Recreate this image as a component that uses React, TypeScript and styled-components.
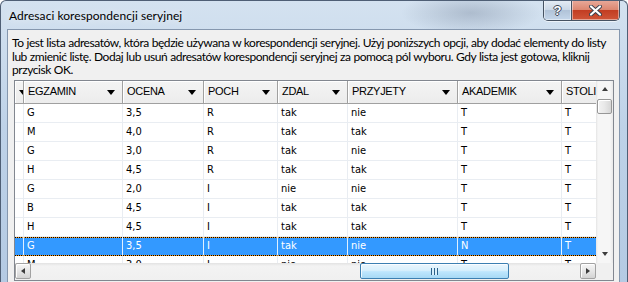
import React from 'react';
import styled, { createGlobalStyle } from 'styled-components';

const GlobalStyle = createGlobalStyle`
  html, body {
    margin: 0;
    padding: 0;
    background: #fff;
  }
  body {
    width: 628px;
    height: 282px;
    overflow: hidden;
  }
`;

const uiFont = `Lato, "Noto Sans", sans-serif`;
const gridFont = `"DejaVu Sans Condensed", "DejaVu Sans", sans-serif`;

const Window = styled.div`
  width: 628px;
  height: 282px;
  box-sizing: border-box;
  overflow: hidden;
  border: 1px solid #4f5f75;
  border-bottom: none;
  border-radius: 6px 6px 0 0;
  background:
    radial-gradient(ellipse 70px 22px at 470px 12px, rgba(80, 95, 120, 0.28), transparent),
    linear-gradient(180deg, #d4e2f0 0%, #bed2e8 45%, #b4cae3 100%);
  display: flex;
  flex-direction: column;
`;

const TitleBar = styled.div`
  height: 28px;
  display: flex;
  align-items: flex-start;
  justify-content: space-between;
  padding-left: 8px;
`;

const Title = styled.div`
  font-family: ${uiFont};
  font-size: 12px;
  letter-spacing: 0.05px;
  line-height: 29px;
  color: #000;
  text-shadow: 0 0 8px rgba(255, 255, 255, 0.9);
`;

const Caption = styled.div`
  display: flex;
  margin: -1px 7px 0 0;
  border: 1px solid #465262;
  border-top: none;
  border-radius: 0 0 5px 5px;
  overflow: hidden;
  box-shadow: 0 1px 0 rgba(255, 255, 255, 0.6);
`;

const CaptionButton = styled.div<{ $close?: boolean }>`
  height: 20px;
  width: ${(p) => (p.$close ? '47px' : '27px')};
  display: flex;
  align-items: center;
  justify-content: center;
  box-shadow: inset 0 0 0 1px rgba(255, 255, 255, 0.45);
  background: ${(p) =>
    p.$close
      ? 'linear-gradient(180deg, #e9ab9c 0%, #dc8771 48%, #c23d22 52%, #cf5539 100%)'
      : 'linear-gradient(180deg, #e6edf5 0%, #cbd8e7 48%, #b1c3d8 52%, #c4d6ea 100%)'};
  & + & {
    border-left: 1px solid #465262;
  }
`;

const HelpGlyph = styled.span`
  font-family: "Liberation Sans", sans-serif;
  font-weight: bold;
  font-size: 13px;
  color: #fff;
  text-shadow: -1px 0 #3c4656, 1px 0 #3c4656, 0 -1px #3c4656, 0 1px #3c4656;
`;

const Client = styled.div`
  flex: 1;
  margin: 0 7px 0 6px;
  background: #f0f0f0;
  border: 1px solid #8597ae;
  border-bottom: none;
  padding: 6px 0 0 4px;
`;

const Intro = styled.p`
  margin: 0;
  font-family: ${uiFont};
  font-size: 12px;
  letter-spacing: -0.45px;
  word-spacing: 0.3px;
  line-height: 13.5px;
  color: #000;
  white-space: nowrap;
`;

const GridBox = styled.div`
  margin: 3px 0 0 2px;
  width: 600px;
  box-sizing: border-box;
  border: 1px solid #828790;
  background: #fff;
  display: grid;
  grid-template-columns: 581px 17px;
  grid-template-rows: 182px 17px;
`;

const DataArea = styled.div`
  overflow: hidden;
`;

const columns = '9px 99px 81px 74px 70px 110px 104px 90px';

const HeaderRow = styled.div`
  display: grid;
  grid-template-columns: ${columns};
  height: 23px;
`;

const HeaderCell = styled.div`
  box-sizing: border-box;
  display: flex;
  align-items: center;
  justify-content: space-between;
  overflow: hidden;
  padding: 0 0 1px 4px;
  border-right: 1px solid #a0a0a0;
  border-bottom: 1px solid #a0a0a0;
  box-shadow: inset 1px 1px 0 #fff;
  background: linear-gradient(180deg, #f4f4f4 0%, #ececec 100%);
  font-family: "Liberation Sans", Arial, sans-serif;
  font-size: 11px;
  letter-spacing: -0.3px;
  color: #000;
  white-space: nowrap;
  &:first-child {
    padding-left: 0;
    justify-content: flex-end;
  }
`;

const DropArrow = styled.span`
  flex: none;
  width: 0;
  height: 0;
  margin: 2px 7px 0 4px;
  border-left: 4.5px solid transparent;
  border-right: 4.5px solid transparent;
  border-top: 5px solid #000;
`;

const CutArrow = styled(DropArrow)`
  margin: 2px -4px 0 0;
`;

const Row = styled.div<{ $selected?: boolean }>`
  display: grid;
  grid-template-columns: ${columns};
  height: 19px;
  color: ${(p) => (p.$selected ? '#fff' : '#000')};
  background: ${(p) =>
    p.$selected
      ? `repeating-linear-gradient(90deg, #000 0 1px, #ff9c1a 1px 2px) left top / 100% 1px no-repeat,
         repeating-linear-gradient(90deg, #000 0 1px, #ff9c1a 1px 2px) left bottom / 100% 1px no-repeat,
         #3399ff`
      : '#fff'};
`;

const Cell = styled.div<{ $selected?: boolean }>`
  box-sizing: border-box;
  padding: 0 0 0 3px;
  border-right: 1px solid ${(p) => (p.$selected ? 'rgba(255,255,255,0.85)' : '#e9edf2')};
  border-bottom: 1px solid ${(p) => (p.$selected ? 'transparent' : '#e9edf2')};
  font-family: ${gridFont};
  font-size: 11px;
  line-height: 18px;
  white-space: nowrap;
  overflow: hidden;
`;

const VScroll = styled.div`
  grid-column: 2;
  grid-row: 1;
  display: flex;
  flex-direction: column;
  background: linear-gradient(90deg, #e4e4e4 0, #f6f6f6 2px, #f6f6f6 14px, #e9e9e9 100%);
`;

const ArrowSlot = styled.div`
  height: 17px;
  flex: none;
  display: flex;
  align-items: center;
  justify-content: center;
`;

const Tri = styled.span<{ $dir: 'up' | 'down' | 'left' | 'right' }>`
  width: 0;
  height: 0;
  ${(p) =>
    p.$dir === 'up'
      ? 'border-left: 3.5px solid transparent; border-right: 3.5px solid transparent; border-bottom: 4px solid #3c3c3c;'
      : p.$dir === 'down'
      ? 'border-left: 3.5px solid transparent; border-right: 3.5px solid transparent; border-top: 4px solid #3c3c3c;'
      : p.$dir === 'left'
      ? 'border-top: 3.5px solid transparent; border-bottom: 3.5px solid transparent; border-right: 4px solid #3c3c3c;'
      : 'border-top: 3.5px solid transparent; border-bottom: 3.5px solid transparent; border-left: 4px solid #3c3c3c;'}
`;

const VThumb = styled.div`
  flex: none;
  margin: 1px 0 0 1px;
  width: 15px;
  height: 15px;
  box-sizing: border-box;
  border: 1px solid #979797;
  border-radius: 2px;
  background: linear-gradient(90deg, #f3f3f3 0%, #e8e8e8 50%, #d6d6d6 100%);
  box-shadow: inset 1px 1px 0 #fff;
`;

const VTrack = styled.div`
  flex: 1;
`;

const HScroll = styled.div`
  grid-column: 1;
  grid-row: 2;
  display: flex;
  align-items: center;
  background: linear-gradient(180deg, #e2e2e2 0, #f3f3f3 3px, #f0f0f0 100%);
`;

const HButton = styled.div`
  flex: none;
  width: 16px;
  height: 16px;
  box-sizing: border-box;
  border: 1px solid #a2a2a2;
  border-radius: 2px;
  display: flex;
  align-items: center;
  justify-content: center;
  background: linear-gradient(180deg, #f6f6f6 0%, #e6e6e6 50%, #d4d4d4 100%);
  box-shadow: inset 1px 1px 0 #fff;
`;

const HTrack = styled.div`
  flex: 1;
  display: flex;
  align-items: center;
`;

const HThumb = styled.div`
  margin-left: 329px;
  width: 149px;
  height: 16px;
  box-sizing: border-box;
  border: 1px solid #3c7fb1;
  border-radius: 2px;
  background: linear-gradient(180deg, #eaf6fd 0%, #d9f0fc 45%, #bee6fd 55%, #a7d9f5 100%);
  box-shadow: inset 1px 1px 0 rgba(255, 255, 255, 0.8);
  display: flex;
  align-items: center;
  justify-content: center;
`;

const Grip = styled.span`
  width: 7px;
  height: 7px;
  background: repeating-linear-gradient(90deg, #2c628b 0 1px, #d9f0fc 1px 3px);
`;

const Corner = styled.div`
  grid-column: 2;
  grid-row: 2;
  background: #f0f0f0;
`;

const headers = ['', 'EGZAMIN', 'OCENA', 'POCH', 'ZDAL', 'PRZYJETY', 'AKADEMIK', 'STOLIK'];

const rows: string[][] = [
  ['G', '3,5', 'R', 'tak', 'nie', 'T', 'T'],
  ['M', '4,0', 'R', 'tak', 'tak', 'T', 'T'],
  ['G', '3,0', 'R', 'tak', 'nie', 'T', 'T'],
  ['H', '4,5', 'R', 'tak', 'tak', 'T', 'T'],
  ['G', '2,0', 'I', 'nie', 'nie', 'T', 'T'],
  ['B', '4,5', 'I', 'tak', 'tak', 'T', 'T'],
  ['H', '4,5', 'I', 'tak', 'tak', 'T', 'T'],
  ['G', '3,5', 'I', 'tak', 'nie', 'N', 'T'],
  ['M', '3,0', 'I', 'nie', 'nie', 'T', 'T'],
];
const selectedRow = 7;

const CloseGlyph = () => (
  <svg width="13" height="11" viewBox="0 0 13 11">
    <path d="M2 1.5 L11 9.5 M11 1.5 L2 9.5" stroke="#3a4250" strokeWidth="4" strokeLinecap="round" />
    <path d="M2 1.5 L11 9.5 M11 1.5 L2 9.5" stroke="#fff" strokeWidth="2.2" strokeLinecap="round" />
  </svg>
);

const App = () => (
  <>
    <GlobalStyle />
    <Window>
      <TitleBar>
        <Title>Adresaci korespondencji seryjnej</Title>
        <Caption>
          <CaptionButton>
            <HelpGlyph>?</HelpGlyph>
          </CaptionButton>
          <CaptionButton $close>
            <CloseGlyph />
          </CaptionButton>
        </Caption>
      </TitleBar>
      <Client>
        <Intro>
          To jest lista adresatów, która będzie używana w korespondencji seryjnej. Użyj poniższych opcji, aby dodać elementy do listy
          <br />
          lub zmienić listę. Dodaj lub usuń adresatów korespondencji seryjnej za pomocą pól wyboru. Gdy lista jest gotowa, kliknij
          <br />
          przycisk OK.
        </Intro>
        <GridBox>
          <DataArea>
            <HeaderRow>
              {headers.map((h, i) => (
                <HeaderCell key={i}>
                  {i === 0 ? (
                    <CutArrow />
                  ) : (
                    <>
                      <span>{h}</span>
                      <DropArrow />
                    </>
                  )}
                </HeaderCell>
              ))}
            </HeaderRow>
            {rows.map((r, i) => {
              const sel = i === selectedRow;
              return (
                <Row key={i} $selected={sel}>
                  <Cell $selected={sel} />
                  {r.map((v, j) => (
                    <Cell key={j} $selected={sel}>
                      {v}
                    </Cell>
                  ))}
                </Row>
              );
            })}
          </DataArea>
          <VScroll>
            <ArrowSlot>
              <Tri $dir="up" />
            </ArrowSlot>
            <VThumb />
            <VTrack />
            <ArrowSlot>
              <Tri $dir="down" />
            </ArrowSlot>
          </VScroll>
          <HScroll>
            <HButton>
              <Tri $dir="left" />
            </HButton>
            <HTrack>
              <HThumb>
                <Grip />
              </HThumb>
            </HTrack>
            <HButton>
              <Tri $dir="right" />
            </HButton>
          </HScroll>
          <Corner />
        </GridBox>
      </Client>
    </Window>
  </>
);

export default App;
